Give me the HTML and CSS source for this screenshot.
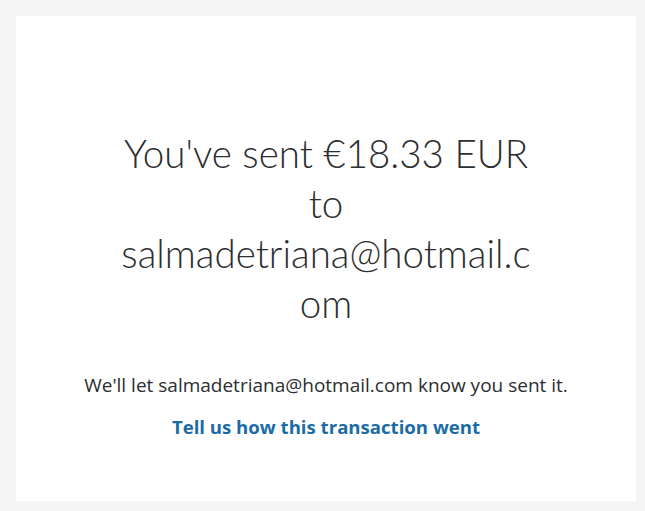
FILE: index.html
```html
<!DOCTYPE html>
<html lang="en">
<head>
<meta charset="utf-8">
<title>Payment sent</title>
<link rel="stylesheet" href="styles.css">
</head>
<body>
<main class="card">
  <h1 class="headline">You've sent €18.33 EUR to salmadetriana@hotmail.com</h1>
  <p class="note">We'll let salmadetriana@hotmail.com know you sent it.</p>
  <a class="feedback" href="#">Tell us how this transaction went</a>
</main>
</body>
</html>
```

FILE: styles.css
```css
html, body {
  margin: 0;
  padding: 0;
}
body {
  background: #f5f5f5;
  padding: 16px 9px 10px 16px;
  font-family: "Open Sans", "Liberation Sans", sans-serif;
  color: #2c2e2f;
}
.card {
  background: #ffffff;
  height: 485px;
  box-sizing: border-box;
  padding-top: 112px;
  display: flex;
  flex-direction: column;
  align-items: center;
}
.headline {
  margin: 0;
  width: 418px;
  font-family: "Lato", "Open Sans", sans-serif;
  font-weight: 300;
  font-size: 38.5px;
  line-height: 50px;
  text-align: center;
  color: #2c2e2f;
  overflow-wrap: anywhere;
}
.note {
  margin: 45px 0 0;
  font-size: 19px;
  line-height: 24px;
  text-align: center;
}
.feedback {
  margin-top: 18px;
  font-size: 18.6px;
  line-height: 24px;
  font-weight: 700;
  color: #1b6ca6;
  text-decoration: none;
}
```
